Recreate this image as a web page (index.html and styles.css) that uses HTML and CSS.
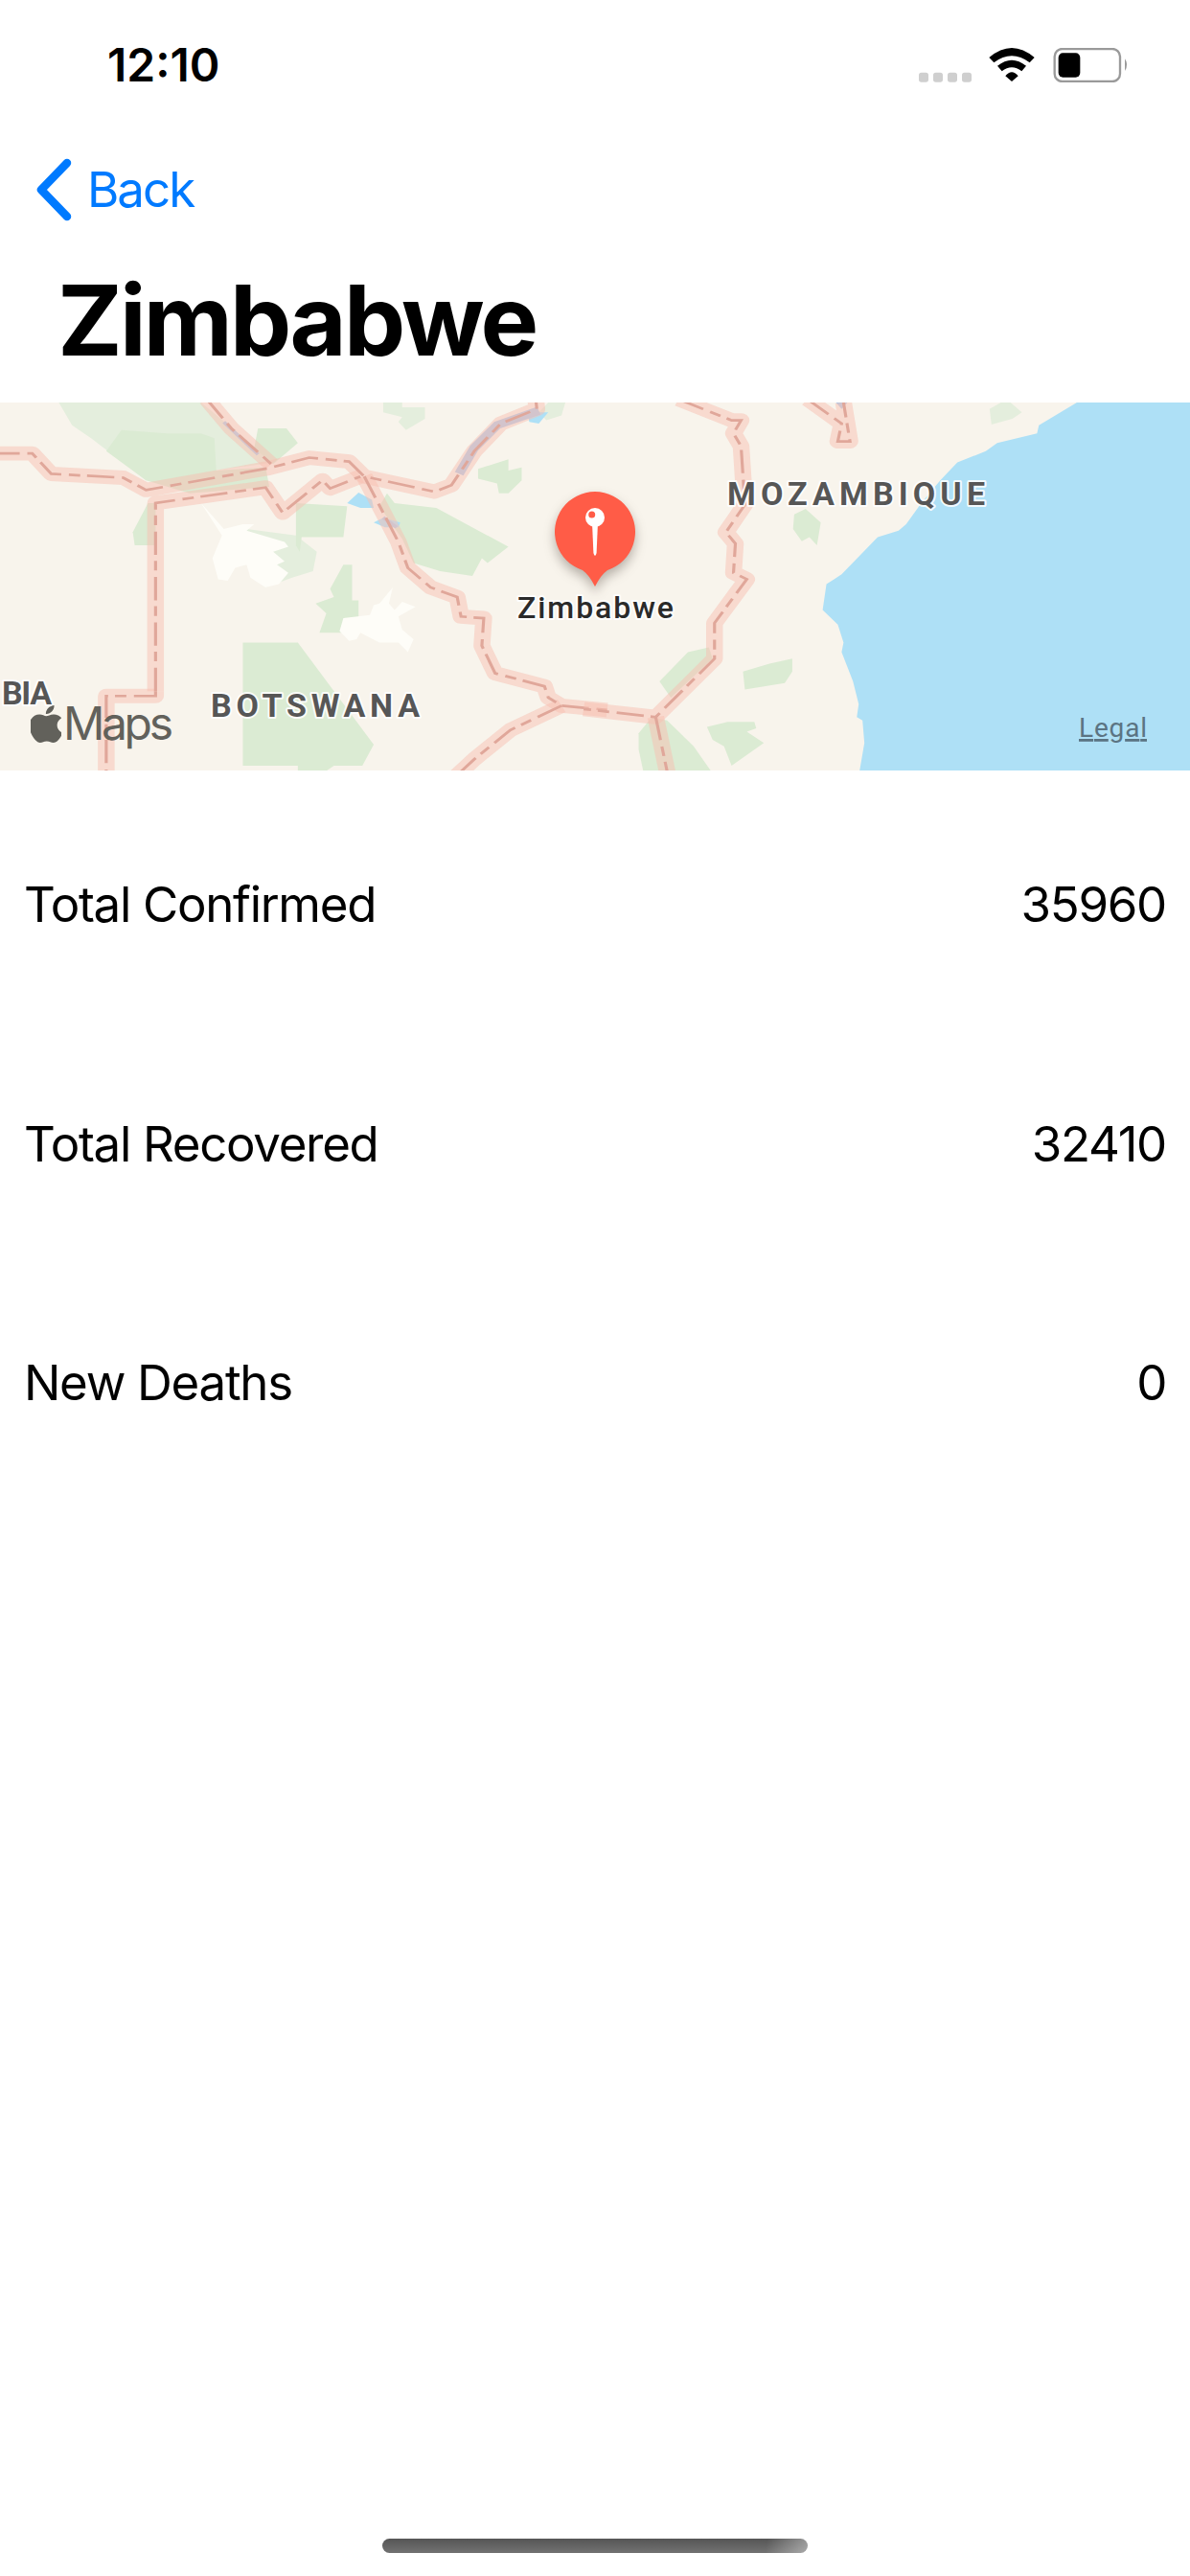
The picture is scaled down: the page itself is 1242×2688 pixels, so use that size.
FILE: index.html
```html
<!DOCTYPE html>
<html lang="en">
<head>
    <meta charset="UTF-8">
    <meta name="viewport" content="width=device-width, initial-scale=1.0">
    <title>Zimbabwe</title>
    <link rel="stylesheet" href="styles.css">
</head>
<body>
    <div class="status">
        <span class="time">12:10</span>
        <svg class="status-icons" viewBox="175 58 660 108" width="220" height="36">
            <rect x="175" y="135" width="30" height="30" rx="8" fill="#cfcfcf"/>
            <rect x="220" y="135" width="30" height="30" rx="8" fill="#cfcfcf"/>
            <rect x="265" y="135" width="30" height="30" rx="8" fill="#cfcfcf"/>
            <rect x="310" y="135" width="30" height="30" rx="8" fill="#cfcfcf"/>
            <path d="M395 88Q466 28 537 88L522 104Q466 62 410 104Z"/>
            <path d="M421 114Q466 78 511 114L497 131Q466 106 435 131Z"/>
            <path d="M446 146Q466 122 486 146L466 163Z"/>
            <rect x="600" y="61" width="205" height="102" rx="24" fill="none" stroke="#9a9a9a" stroke-width="7"/>
            <rect x="612" y="74" width="68" height="76" rx="14"/>
            <path d="M820 92Q833 110 820 130Z" fill="#9a9a9a"/>
        </svg>
    </div>
    <div class="nav">
        <svg class="chevron" viewBox="0 0 40 66" width="40" height="66">
            <path d="M33 5L6 33L33 61" fill="none" stroke="#007aff" stroke-width="8.5" stroke-linecap="round" stroke-linejoin="round"/>
        </svg>
        <span class="back">Back</span>
    </div>
    <h1 class="title">Zimbabwe</h1>

    <svg class="map" viewBox="0 0 1242 384" width="1242" height="384">
        <rect width="1242" height="384" fill="#f8f4ec"/>

        <!-- left half, points read off the crop -->
        <g transform="scale(0.396 0.3384) translate(0 -30)">
            <polygon class="green-l" points="155,30 530,30 720,215 565,240 385,270 240,140 190,100"/>
            <polygon class="green" points="320,115 440,125 530,125 565,140 570,240 700,230 710,290 500,310 385,270 280,180"/>
            <polygon class="green" points="680,110 755,110 785,155 720,220 670,170"/>
            <polygon class="green-l" points="1010,30 1060,30 1060,45 1120,45 1120,80 1070,115 1050,90 1060,75 1010,60"/>
            <polygon class="green-l" points="1445,30 1490,30 1480,70 1440,85 1420,60"/>
            <polygon class="green" points="1260,235 1340,205 1340,240 1375,230 1375,270 1340,310 1315,310 1310,280 1260,265"/>
            <polygon class="green" points="390,340 350,430 355,470 410,470 410,340"/>
            <polygon class="green-l" points="650,420 780,440 835,490 825,550 770,570 700,600 640,500"/>
            <polygon class="green" points="780,340 915,350 905,445 795,445 790,490 780,470"/>
            <polygon class="green" points="1020,310 1040,340 1150,355 1340,475 1285,525 1270,510 1245,565 1160,550 1090,525 1060,450 1000,350"/>
            <polygon class="green" points="905,530 928,530 928,640 945,640 945,740 842,740 860,680 832,650 880,630 870,605"/>
            <polygon class="green" points="640,770 785,770 985,1085 955,1150 880,1150 840,1182 785,1182 785,1150 640,1150"/>
            <polygon class="salt" points="530,340 590,420 640,405 670,405 650,425 750,460 760,475 720,490 750,520 730,530 760,555 735,590 700,600 660,570 650,530 620,540 600,580 575,575 560,510 585,440"/>
            <polygon class="salt" points="1035,600 1000,650 985,655 975,685 905,695 895,735 920,765 940,760 950,740 1000,770 1050,770 1075,800 1090,760 1060,730 1050,690 1095,660 1060,645 1040,670 1025,650"/>
            <polygon class="water" points="915,340 945,308 980,330 985,355 950,355"/>
            <polygon class="water" points="985,400 1010,385 1055,400 1050,415 1015,415"/>
            <polygon class="water" points="1390,60 1445,60 1420,95 1395,90"/>
            <path class="river" d="M1210 250L1250 170L1310 100L1420 55"/>
            <path class="river thin" d="M590 90L680 190"/>
            <path class="river thin" d="M1010 385L1045 415"/>

            <path class="border" d="M-20 187L85 187L135 250L325 262L385 300L710 232L815 200L920 212L960 258L1145 305L1190 285L1250 180L1320 95L1415 50L1412 20"/>
            <path class="border" d="M545 20L610 110L715 220"/>
            <path class="border" d="M410 920L410 340L700 292L745 370L850 270L870 295L950 258"/>
            <path class="border" d="M960 258L1010 370L1050 460L1075 540L1135 600L1205 630L1215 690L1275 695L1270 780L1305 865L1435 905L1445 940L1480 965L1600 978"/>
            <path class="border" d="M1480 965L1345 1040L1250 1130L1190 1195"/>
            <path class="border" d="M410 920L410 935L280 935L280 1195"/>
            <path class="dash" d="M-20 187L85 187L135 250L325 262L385 300L710 232L815 200L920 212L960 258L1145 305L1190 285L1250 180L1320 95L1415 50L1412 20"/>
            <path class="dash" d="M545 20L610 110L715 220"/>
            <path class="dash" d="M410 920L410 340L700 292L745 370L850 270L870 295L950 258"/>
            <path class="dash" d="M960 258L1010 370L1050 460L1075 540L1135 600L1205 630L1215 690L1275 695L1270 780L1305 865L1435 905L1445 940L1480 965L1600 978"/>
            <path class="dash" d="M1480 965L1345 1040L1250 1130L1190 1195"/>
            <path class="dash" d="M410 920L410 935L280 935L280 1195"/>
        </g>

        <!-- right half -->
        <g transform="translate(621 0) scale(0.396 0.3384) translate(0 -30)">
            <polygon class="water" points="1270,30 1170,100 1165,125 1060,155 1030,180 955,215 910,270 860,340 820,405 800,425 745,445 650,560 630,575 610,590 600,670 640,715 655,770 650,800 680,890 695,960 690,1000 705,1010 710,1080 695,1182 1570,1182 1570,30"/>
            <polygon class="green-l" points="1040,50 1070,30 1095,30 1125,60 1100,80 1045,98"/>
            <polygon class="green" points="525,375 555,358 595,400 585,470 565,445 545,458 522,420"/>
            <polygon class="green" points="170,890 245,800 300,785 310,820 200,940"/>
            <polygon class="green" points="390,860 460,835 520,820 520,860 500,895 395,915"/>
            <polygon class="green" points="295,1030 350,1015 420,1015 425,1035 400,1045 445,1080 360,1150 340,1090 310,1070"/>
            <polygon class="green" points="115,1050 150,1000 190,1010 260,1090 315,1182 130,1182 115,1100"/>
            <polygon class="river-fill" points="635,30 665,30 650,50"/>

            <path class="border" d="M220 20L360 85L385 85L365 125L385 165L395 345L345 430L370 465L365 555L400 575L315 710L315 820L160 1000L-30 975"/>
            <path class="border" d="M160 1000L195 1195"/>
            <path class="border" d="M560 20L650 95L640 150L672 150L655 30"/>
            <path class="dash" d="M220 20L360 85L385 85L365 125L385 165L395 345L345 430L370 465L365 555L400 575L315 710L315 820L160 1000L-30 975"/>
            <path class="dash" d="M160 1000L195 1195"/>
            <path class="dash" d="M560 20L650 95L640 150L672 150L655 30"/>
        </g>

        <path class="pin" d="M608 175A42 42 0 1 1 634 175Q627 180 621 192Q615 180 608 175Z"/>
        <circle cx="621" cy="120" r="10" fill="#fff"/>
        <circle cx="617.7" cy="117" r="3.5" fill="#ff5c47"/>
        <path d="M618 125L624 125L622.6 157Q621 163 619.4 157Z" fill="#fff"/>

        <text class="place" x="540" y="225" textLength="163">Zimbabwe</text>
        <text class="country" x="759" y="107" textLength="269">MOZAMBIQUE</text>
        <text class="country" x="220" y="328" textLength="218">BOTSWANA</text>
        <text class="country" x="2" y="315" textLength="52" lengthAdjust="spacing">BIA</text>

        <svg x="32" y="316" width="32" height="39" viewBox="3 0 18 24" preserveAspectRatio="none">
            <path fill="#62615b" d="M12.152 6.896c-.948 0-2.415-1.078-3.96-1.04-2.04.027-3.91 1.183-4.961 3.014-2.117 3.675-.546 9.103 1.519 12.09 1.013 1.454 2.208 3.09 3.792 3.039 1.52-.065 2.09-.987 3.935-.987 1.831 0 2.35.987 3.96.948 1.637-.026 2.676-1.48 3.676-2.948 1.156-1.688 1.636-3.325 1.662-3.415-.039-.013-3.182-1.221-3.22-4.857-.026-3.04 2.48-4.494 2.597-4.559-1.429-2.09-3.623-2.324-4.39-2.376-2-.156-3.675 1.09-4.61 1.09zM15.53 3.83c.843-1.012 1.4-2.427 1.245-3.83-1.207.052-2.662.805-3.532 1.818-.78.896-1.454 2.338-1.273 3.714 1.338.104 2.715-.688 3.559-1.701"/>
        </svg>
        <text class="maps" x="66" y="352" textLength="115">Maps</text>
        <text class="legal" x="1126" y="349" textLength="71">Legal</text>
    </svg>

    <div class="stats">
        <div class="row"><span>Total Confirmed</span><span>35960</span></div>
        <div class="row"><span>Total Recovered</span><span>32410</span></div>
        <div class="row"><span>New Deaths</span><span>0</span></div>
    </div>

    <div class="home-wrap"><div class="home"></div></div>
</body>
</html>
```

FILE: styles.css
```css
html, body {
    margin: 0;
    padding: 0;
}
body {
    width: 1242px;
    height: 2688px;
    background: #fff;
    color: #000;
    font-family: Inter, "Liberation Sans", sans-serif;
    overflow: hidden;
    display: flex;
    flex-direction: column;
}
.status {
    height: 132px;
    flex: none;
    display: flex;
    justify-content: space-between;
    padding: 0 63px 0 112px;
    box-sizing: border-box;
}
.time {
    font-size: 48px;
    font-weight: 600;
    line-height: 56px;
    margin-top: 40px;
}
.status-icons {
    margin-top: 50px;
}
.nav {
    height: 100px;
    flex: none;
    display: flex;
    align-items: flex-start;
    padding-left: 37px;
    gap: 14px;
}
.chevron {
    margin-top: 33px;
}
.back {
    color: #007aff;
    font-size: 51px;
    letter-spacing: -2px;
    line-height: 62px;
    margin-top: 35px;
}
.title {
    margin: 0;
    padding: 16px 0 0 60px;
    font-size: 102px;
    font-weight: 700;
    letter-spacing: -2.8px;
    line-height: 172px;
    height: 172px;
    flex: none;
}
.map {
    display: block;
    flex: none;
}
.green { fill: #dbebd3; }
.green-l { fill: #e4eedd; }
.salt { fill: #fefdf8; }
.water { fill: #aee0f6; }
.river {
    fill: none;
    stroke: #aec8e6;
    stroke-width: 25;
}
.river.thin { stroke-width: 10; }
.river-fill { fill: #aec8e6; }
.border {
    fill: none;
    stroke: #f8bfb2;
    stroke-opacity: 0.5;
    stroke-width: 44;
    stroke-linejoin: round;
}
.dash {
    fill: none;
    stroke: #e0a79a;
    stroke-width: 8;
    stroke-dasharray: 72 20 30 18;
}
.pin {
    fill: #ff5c47;
    filter: drop-shadow(0 6px 6px rgba(60, 50, 40, 0.35));
}
.place, .country {
    paint-order: stroke;
    stroke: rgba(255, 255, 255, 0.85);
    stroke-width: 4px;
    stroke-linejoin: round;
}
.place {
    font-family: Roboto, sans-serif;
    font-size: 32px;
    font-weight: 500;
    fill: #2a2a2a;
}
.country {
    font-family: Roboto, sans-serif;
    font-size: 34px;
    font-weight: 700;
    fill: #565656;
}
.maps {
    font-size: 48px;
    fill: #62615b;
}
.legal {
    font-family: Roboto, sans-serif;
    font-size: 28px;
    fill: #5b7483;
    text-decoration: underline;
}
.stats {
    padding-top: 15px;
    flex: none;
}
.row {
    height: 249.5px;
    padding: 0 25px;
    display: flex;
    justify-content: space-between;
    align-items: center;
    font-size: 51px;
    letter-spacing: -1.3px;
}
.home-wrap {
    margin-top: auto;
    padding-bottom: 24px;
    display: flex;
    justify-content: center;
}
.home {
    width: 444px;
    height: 15px;
    border-radius: 8px;
    background: linear-gradient(100deg, rgba(255, 255, 255, 0) 90%, rgba(255, 255, 255, 0.4) 100%), linear-gradient(#555, #727272);
}
```
